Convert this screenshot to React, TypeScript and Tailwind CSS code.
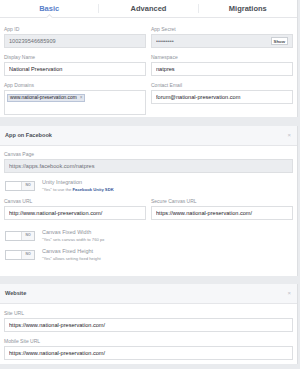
import { ReactNode } from 'react'

function Label({ children }: { children: ReactNode }) {
  return <div className="h-[8px] mb-[1px] text-[5px] leading-[8px] text-[#90949c]">{children}</div>
}

function Input({ value, disabled, children }: { value?: string; disabled?: boolean; children?: ReactNode }) {
  return (
    <div
      className={`h-[14px] border border-[#dddfe2] px-[4px] flex items-center text-[5.6px] text-[#1d2129] ${
        disabled ? 'bg-[#ebedf0] text-[#6b6f76]' : 'bg-white'
      }`}
    >
      <span className="flex-1 truncate">{value}</span>
      {children}
    </div>
  )
}

function Field({ label, value, disabled }: { label: string; value: string; disabled?: boolean }) {
  return (
    <div>
      <Label>{label}</Label>
      <Input value={value} disabled={disabled} />
    </div>
  )
}

function Toggle({ title, children }: { title: string; children: ReactNode }) {
  return (
    <div className="flex items-center gap-[7px] h-[12px]">
      <div className="w-[30px] h-[10px] border border-[#ccd0d5] flex bg-white">
        <div className="flex-1" />
        <div className="w-[13px] bg-[#f6f7f9] border-l border-[#dddfe2] flex items-center justify-center text-[3.5px] font-bold text-[#90949c]">
          NO
        </div>
      </div>
      <div className="leading-none">
        <div className="text-[5.5px] text-[#90949c]">{title}</div>
        <div className="mt-[2px] text-[4.2px] text-[#90949c]">{children}</div>
      </div>
    </div>
  )
}

function Header({ title }: { title: string }) {
  return (
    <div className="h-[20px] bg-[#f6f7f9] border-b border-[#e5e6e9] flex items-center justify-between px-[5px]">
      <span className="text-[5.6px] font-bold text-[#4b4f56]">{title}</span>
      <span className="text-[6px] text-[#bec2c9] mr-[1px]">×</span>
    </div>
  )
}

export default function App() {
  return (
    <div className="w-[300px] h-[369px] overflow-hidden bg-[#e9ebee] font-['Liberation_Sans',Arial,sans-serif]">
      <div className="w-[298px] bg-white border-r border-[#dddfe2]">
        <div className="relative h-[18px] flex border-b border-[#e5e6e9]">
          <div className="relative flex-1 flex items-center justify-center text-[7.5px] font-bold text-[#5a80c9]">
            Basic
            <div className="absolute left-1/2 -bottom-[3px] w-[5px] h-[5px] -ml-[2px] bg-white border-l border-t border-[#e5e6e9] rotate-45" />
          </div>
          <div className="w-px my-[4px] bg-[#e9ebee]" />
          <div className="flex-1 flex items-center justify-center text-[7.5px] font-bold text-[#4b4f56]">Advanced</div>
          <div className="w-px my-[4px] bg-[#e9ebee]" />
          <div className="flex-1 flex items-center justify-center text-[7.5px] font-bold text-[#4b4f56]">Migrations</div>
        </div>
        <div className="grid grid-cols-2 gap-x-[5px] gap-y-[5px] px-[4px] pt-[7px] pb-[2px]">
          <Field label="App ID" value="100239546685909" disabled />
          <div>
            <Label>App Secret</Label>
            <Input value="•••••••••" disabled>
              <span className="h-[8px] px-[2px] bg-white border border-[#ccd0d5] text-[4.3px] leading-[7px] font-bold text-[#4b4f56]">
                Show
              </span>
            </Input>
          </div>
          <Field label="Display Name" value="National Preservation" />
          <Field label="Namespace" value="natpres" />
          <div>
            <Label>App Domains</Label>
            <div className="h-[25px] border border-[#dddfe2] bg-white px-[2px] pt-[3px] flex items-start">
              <span className="flex items-center h-[8px] px-[2px] gap-[3px] bg-[#e2e6ee] border border-[#b9c4d8] text-[4.8px] leading-none text-[#1d2129]">
                www.national-preservation.com <span className="text-[#90949c]">×</span>
              </span>
            </div>
          </div>
          <Field label="Contact Email" value="forum@national-preservation.com" />
        </div>
      </div>

      <div className="h-[9px]" />

      <div className="w-[298px] bg-white border-r border-[#dddfe2]">
        <Header title="App on Facebook" />
        <div className="px-[4px] pt-[4px] pb-[15px]">
          <Field label="Canvas Page" value="https://apps.facebook.com/natpres" disabled />
          <div className="mt-[7px] pl-[1px]">
            <Toggle title="Unity Integration">
              "Yes" to use the <span className="font-bold text-[#365899]">Facebook Unity SDK</span>
            </Toggle>
          </div>
          <div className="grid grid-cols-2 gap-x-[5px] mt-[5px]">
            <Field label="Canvas URL" value="http://www.national-preservation.com/" />
            <Field label="Secure Canvas URL" value="https://www.national-preservation.com/" />
          </div>
          <div className="mt-[10px] pl-[1px] flex flex-col gap-[7px]">
            <Toggle title="Canvas Fixed Width">"Yes" sets canvas width to 760 px</Toggle>
            <Toggle title="Canvas Fixed Height">"Yes" allows setting fixed height</Toggle>
          </div>
        </div>
      </div>

      <div className="h-[8px]" />

      <div className="w-[298px] bg-white border-r border-[#dddfe2]">
        <Header title="Website" />
        <div className="px-[4px] pt-[5px] pb-[4px] flex flex-col gap-[5px]">
          <Field label="Site URL" value="https://www.national-preservation.com/" />
          <Field label="Mobile Site URL" value="https://www.national-preservation.com/" />
        </div>
      </div>
    </div>
  )
}
